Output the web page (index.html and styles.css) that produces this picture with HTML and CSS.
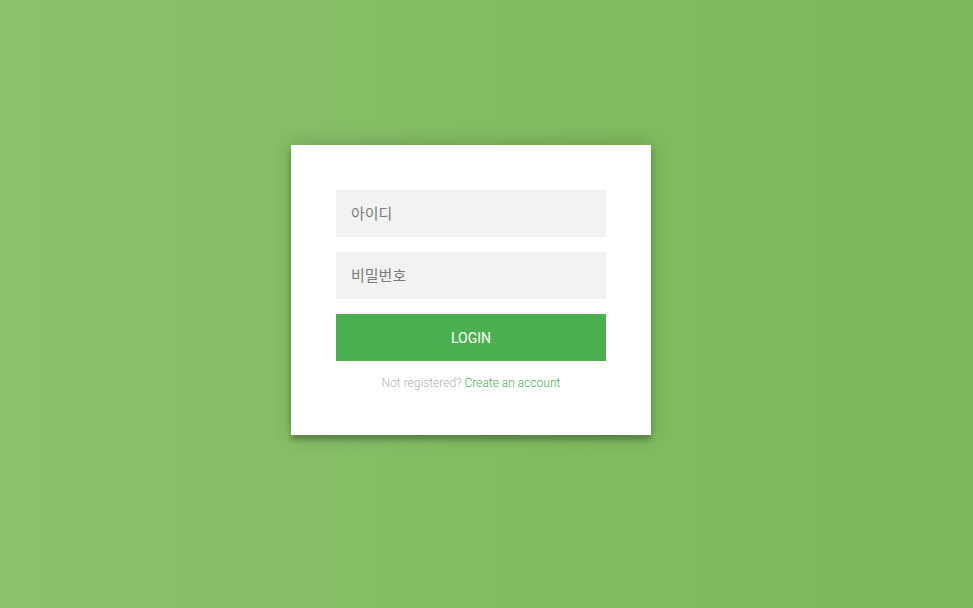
FILE: index.html
```html
<!DOCTYPE html>
<html lang="ko">
<head>
<meta charset="utf-8">
<title>Login</title>
<link rel="stylesheet" href="styles.css">
</head>
<body>
<div class="login-page">
  <form class="form">
    <input class="field" type="text" placeholder="아이디">
    <input class="field" type="password" placeholder="비밀번호">
    <button class="btn" type="button">login</button>
    <p class="message">Not registered? <a href="#">Create an account</a></p>
  </form>
</div>
</body>
</html>
```
FILE: styles.css
```css
* { box-sizing: border-box; }
html, body { margin: 0; height: 100%; }
body {
  background: #7ab95c;
  background: linear-gradient(to left, #7ab85a, #8bc26c);
  font-family: Roboto, "Noto Sans CJK KR", sans-serif;
}
.login-page {
  display: flex;
  justify-content: center;
  align-items: flex-start;
  padding: 145px 31px 0 0;
}
.form {
  width: 360px;
  background: #fff;
  padding: 45px;
  margin: 0;
  text-align: center;
  box-shadow: 0 0 20px 0 rgba(0, 0, 0, 0.2), 0 5px 5px 0 rgba(0, 0, 0, 0.24);
  display: flex;
  flex-direction: column;
}
.field {
  font-family: Roboto, "Noto Sans CJK KR", sans-serif;
  outline: 0;
  background: #f2f2f2;
  width: 100%;
  height: 47px;
  border: 0;
  margin: 0 0 15px;
  padding: 0 15px;
  font-size: 15px;
  color: #333;
}
.field::placeholder { color: #7a7a7a; opacity: 1; }
.btn {
  font-family: Roboto, "Noto Sans CJK KR", sans-serif;
  text-transform: uppercase;
  outline: 0;
  background: #4caf50;
  width: 100%;
  height: 47px;
  border: 0;
  padding: 0;
  color: #fff;
  font-size: 14px;
  cursor: pointer;
}
.message {
  margin: 15px 0 0;
  color: #b3b3b3;
  font-size: 12px;
  font-weight: 300;
  line-height: 14px;
}
.message a {
  color: #4caf50;
  text-decoration: none;
}
```
